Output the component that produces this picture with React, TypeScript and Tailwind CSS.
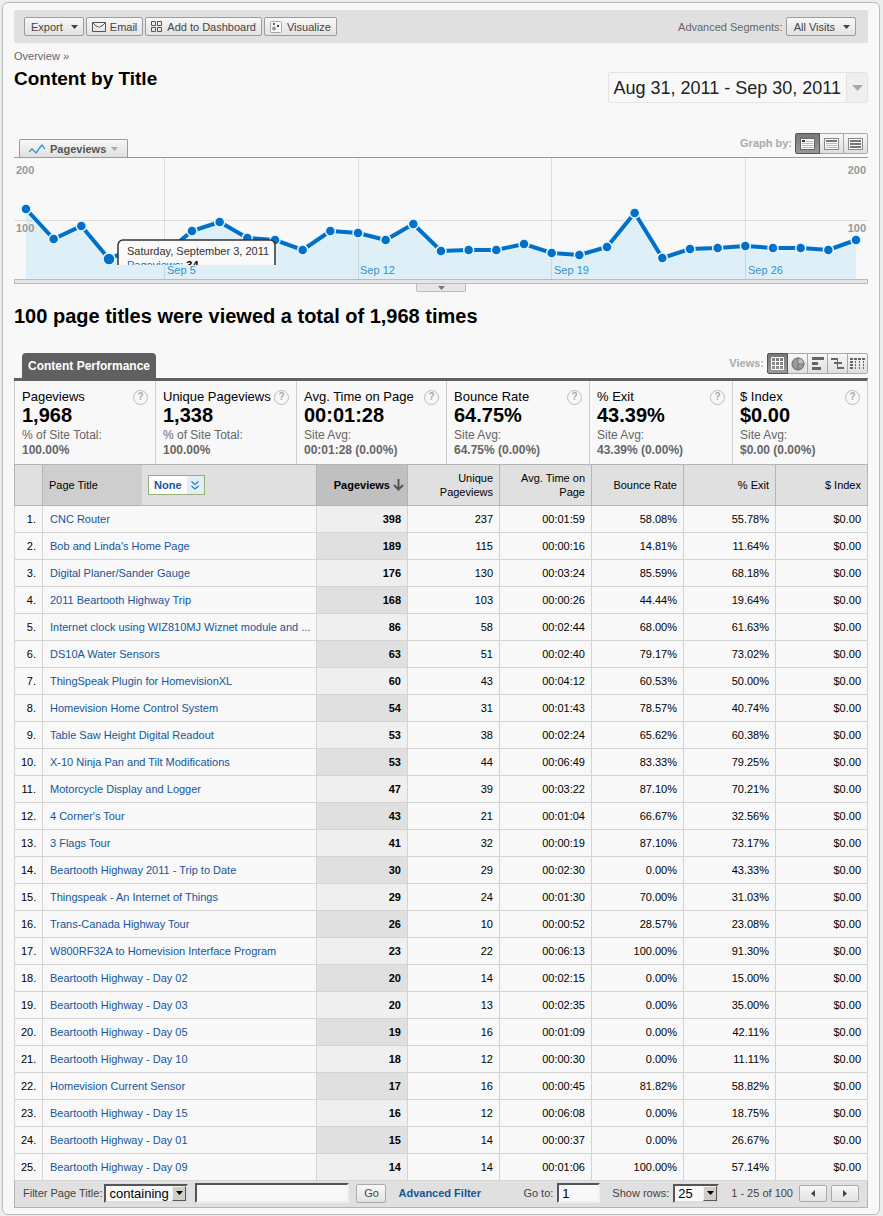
import type { ReactNode } from "react";
import clsx from "clsx";

const CHART_POINTS = [
  51, 81, 68, 101, 89, 96, 73, 64, 80, 82, 92, 73, 75, 82, 66, 93, 92, 92, 86, 95, 97, 89, 55, 100, 91, 90, 88, 90, 90, 92, 82,
];

const SUMMARY = [
  { label: "Pageviews", value: "1,968", note: "% of Site Total:", detail: "100.00%" },
  { label: "Unique Pageviews", value: "1,338", note: "% of Site Total:", detail: "100.00%" },
  { label: "Avg. Time on Page", value: "00:01:28", note: "Site Avg:", detail: "00:01:28 (0.00%)" },
  { label: "Bounce Rate", value: "64.75%", note: "Site Avg:", detail: "64.75% (0.00%)" },
  { label: "% Exit", value: "43.39%", note: "Site Avg:", detail: "43.39% (0.00%)" },
  { label: "$ Index", value: "$0.00", note: "Site Avg:", detail: "$0.00 (0.00%)" },
];

// title, pageviews, unique, avg. time, bounce rate, exit
const ROWS = [
  ["CNC Router", "398", "237", "00:01:59", "58.08%", "55.78%"],
  ["Bob and Linda's Home Page", "189", "115", "00:00:16", "14.81%", "11.64%"],
  ["Digital Planer/Sander Gauge", "176", "130", "00:03:24", "85.59%", "68.18%"],
  ["2011 Beartooth Highway Trip", "168", "103", "00:00:26", "44.44%", "19.64%"],
  ["Internet clock using WIZ810MJ Wiznet module and ...", "86", "58", "00:02:44", "68.00%", "61.63%"],
  ["DS10A Water Sensors", "63", "51", "00:02:40", "79.17%", "73.02%"],
  ["ThingSpeak Plugin for HomevisionXL", "60", "43", "00:04:12", "60.53%", "50.00%"],
  ["Homevision Home Control System", "54", "31", "00:01:43", "78.57%", "40.74%"],
  ["Table Saw Height Digital Readout", "53", "38", "00:02:24", "65.62%", "60.38%"],
  ["X-10 Ninja Pan and Tilt Modifications", "53", "44", "00:06:49", "83.33%", "79.25%"],
  ["Motorcycle Display and Logger", "47", "39", "00:03:22", "87.10%", "70.21%"],
  ["4 Corner's Tour", "43", "21", "00:01:04", "66.67%", "32.56%"],
  ["3 Flags Tour", "41", "32", "00:00:19", "87.10%", "73.17%"],
  ["Beartooth Highway 2011 - Trip to Date", "30", "29", "00:02:30", "0.00%", "43.33%"],
  ["Thingspeak - An Internet of Things", "29", "24", "00:01:30", "70.00%", "31.03%"],
  ["Trans-Canada Highway Tour", "26", "10", "00:00:52", "28.57%", "23.08%"],
  ["W800RF32A to Homevision Interface Program", "23", "22", "00:06:13", "100.00%", "91.30%"],
  ["Beartooth Highway - Day 02", "20", "14", "00:02:15", "0.00%", "15.00%"],
  ["Beartooth Highway - Day 03", "20", "13", "00:02:35", "0.00%", "35.00%"],
  ["Beartooth Highway - Day 05", "19", "16", "00:01:09", "0.00%", "42.11%"],
  ["Beartooth Highway - Day 10", "18", "12", "00:00:30", "0.00%", "11.11%"],
  ["Homevision Current Sensor", "17", "16", "00:00:45", "81.82%", "58.82%"],
  ["Beartooth Highway - Day 15", "16", "12", "00:06:08", "0.00%", "18.75%"],
  ["Beartooth Highway - Day 01", "15", "14", "00:00:37", "0.00%", "26.67%"],
  ["Beartooth Highway - Day 09", "14", "14", "00:01:06", "100.00%", "57.14%"],
];

function Caret({ className }: { className?: string }) {
  return (
    <svg width="7" height="4" viewBox="0 0 7 4" className={clsx("shrink-0", className)} aria-hidden="true">
      <path d="M0 0h7L3.5 4z" fill="currentColor" />
    </svg>
  );
}

function ToolbarButton({ children }: { children: ReactNode }) {
  return (
    <button className="flex h-[19px] items-center gap-1 rounded-xs border border-[#9c9c9c] bg-linear-to-b from-[#f8f8f8] to-[#e2e2e2] px-[5px] whitespace-nowrap text-[#444]">
      {children}
    </button>
  );
}

function Toolbar() {
  return (
    <div className="flex h-[33px] items-center justify-between rounded-xs bg-[#e0e0e0] pr-3 pl-2.5">
      <div className="flex gap-0.5">
        <ToolbarButton>
          <span className="pl-px">Export</span>
          <Caret className="ml-1" />
        </ToolbarButton>
        <ToolbarButton>
          <svg width="14" height="10" viewBox="0 0 14 10" fill="none" stroke="#555" aria-hidden="true">
            <path d="M.5.5h13v9H.5zM1 1l3 3 2 .5L7 5.500l1-1 2-.5 3-3" />
          </svg>
          Email
        </ToolbarButton>
        <ToolbarButton>
          <svg width="11" height="11" viewBox="0 0 11 11" fill="none" stroke="#555" aria-hidden="true">
            <path d="M.5.5h4v4h-4zM6.500.5h4v4h-4zM.5 6.500h4v4h-4zM6.500 6.500h4v4h-4z" />
          </svg>
          <span className="pl-px">Add to Dashboard</span>
        </ToolbarButton>
        <ToolbarButton>
          <svg width="12" height="12" viewBox="0 0 12 12" aria-hidden="true">
            <rect x=".5" y=".5" width="11" height="11" rx="1" fill="#f8f8f8" stroke="#aaa" />
            <rect x="3" y="2" width="2" height="2" fill="#666" />
            <rect x="7" y="4" width="2" height="2" fill="#444" />
            <circle cx="4" cy="7.500" r="2" fill="#999" />
          </svg>
          <span className="pl-px">Visualize</span>
        </ToolbarButton>
      </div>
      <div className="flex items-center gap-[3px]">
        <span className="text-[#666]">Advanced Segments:</span>
        <ToolbarButton>
          <span className="pl-0.5">All Visits</span>
          <Caret className="ml-1" />
        </ToolbarButton>
      </div>
    </div>
  );
}

function SegmentButton({ label, active, wide, children }: { label: string; active?: boolean; wide?: boolean; children: ReactNode }) {
  return (
    <button
      aria-label={label}
      aria-pressed={!!active}
      className={clsx(
        "-ml-px flex h-[21px] items-center justify-center border first:rounded-l-xs last:rounded-r-xs",
        wide ? "w-[25px]" : "w-[21px]",
        active ? "relative border-[#555] bg-linear-to-b from-[#777] to-[#999] text-white" : "border-[#a8a8a8] bg-linear-to-b from-[#f8f8f8] to-[#dedede] text-[#666]",
      )}
    >
      {children}
    </button>
  );
}

function PageIcon({ kind }: { kind: "day" | "week" | "month" }) {
  return (
    <svg width="15" height="12" viewBox="0 0 15 12" aria-hidden="true">
      <rect x=".5" y=".5" width="14" height="11" fill="#fafafa" stroke={kind === "day" ? "#666" : "#888"} />
      {kind === "day" && <path d="M2 2h3v2H2z" fill="#336" />}
      {kind === "day" && <path d="M6 3.500h7M2 5.500h11M2 7.500h11M2 9.500h11" stroke="#bbb" />}
      {kind === "week" && <path d="M2 2h11v2H2z" fill="#777" />}
      {kind === "week" && <path d="M2 5.500h11M2 7.500h11M2 9.500h11" stroke="#bbb" />}
      {kind === "month" && <path d="M2 2h11v2H2zM2 5h11v2H2zM2 8h11v2H2z" fill="#777" />}
    </svg>
  );
}

function PageviewsChart() {
  const points = CHART_POINTS.map((y, i) => [12 + (i * 830) / 30, y]);
  const line = points.map(([x, y]) => `${x},${y}`).join(" ");

  return (
    <div className="border-t border-[#9a9a9a]">
      <svg viewBox="0 0 854 121" className="block w-full" role="img" aria-label="Pageviews by day">
        <defs>
          <clipPath id="plot">
            <rect width="854" height="107" />
          </clipPath>
        </defs>
        <polygon points={`12,121 ${line} 842,121`} fill="#dfeff8" />
        <path d="M0 62.500h854M150.500 0v121M344.500 0v121M537.500 0v121M731.500 0v121" stroke="#000" strokeOpacity=".1" />
        <polyline points={line} fill="none" stroke="#e8f5fc" strokeWidth="6" />
        <polyline points={line} fill="none" stroke="#0070c8" strokeWidth="4" />
        {points.map(([x, y], i) => (
          <circle key={i} cx={x} cy={y} r={i === 3 ? 6 : 5} fill="#0070c8" stroke="#e8f5fc" strokeWidth="1.5" />
        ))}
        <g fill="#999" fontSize="11" fontWeight="bold">
          <text x="2" y="16">200</text>
          <text x="2" y="74">100</text>
          <text x="852" y="16" textAnchor="end">200</text>
          <text x="852" y="74" textAnchor="end">100</text>
        </g>
        <g clipPath="url(#plot)" fontSize="11">
          <rect x="104" y="82" width="157" height="44" rx="5" fill="#f9f9f9" stroke="#333" strokeWidth="1.5" />
          <text x="113" y="97" fill="#333">Saturday, September 3, 2011</text>
          <text x="113" y="111" fill="#0070c8">
            Pageviews: <tspan fill="#000" fontWeight="bold">34</tspan>
          </text>
        </g>
        <g fill="#3393c9" fontSize="11">
          <text x="153" y="116">Sep 5</text>
          <text x="346" y="116">Sep 12</text>
          <text x="540" y="116">Sep 19</text>
          <text x="734" y="116">Sep 26</text>
        </g>
      </svg>
      <div className="h-[5px] border border-[#bbb] bg-[#e6e6e6]" />
      <button aria-label="Collapse graph" className="mx-auto flex h-2 w-[50px] items-center justify-center rounded-b-xs border border-t-0 border-[#bbb] bg-[#e6e6e6] text-[#777]">
        <Caret />
      </button>
    </div>
  );
}

function ViewIcons() {
  return (
    <div className="flex pl-px">
      <SegmentButton label="Table" active>
        <svg width="13" height="13" viewBox="0 0 13 13" fill="none" aria-hidden="true">
          <path d="M.5.5h12v12H.5zM4.500 0v13M8.500 0v13M0 4.500h13M0 8.500h13" stroke="#fff" />
        </svg>
      </SegmentButton>
      <SegmentButton label="Percentage">
        <svg width="14" height="14" viewBox="0 0 14 14" aria-hidden="true">
          <circle cx="7" cy="7" r="6" fill="#999" stroke="#666" />
          <path d="M7 7V1a6 6 0 0 1 6 6z" fill="#d9b8b8" stroke="#777" />
          <path d="M7 7v6" stroke="#777" />
        </svg>
      </SegmentButton>
      <SegmentButton label="Performance">
        <svg width="12" height="13" viewBox="0 0 12 13" fill="currentColor" aria-hidden="true">
          <path d="M0 0h12v3H0zM0 5h6v3H0zM0 10h9v3H0z" />
        </svg>
      </SegmentButton>
      <SegmentButton label="Comparison">
        <svg width="13" height="13" viewBox="0 0 13 13" fill="currentColor" aria-hidden="true">
          <path d="M0 1h7v2H0zM6 1h1v11H6zM6 5h5v2H6zM3 5h4v2H3zM6 10h7v2H6z" />
        </svg>
      </SegmentButton>
      <SegmentButton label="Pivot">
        <svg width="15" height="12" viewBox="0 0 15 12" fill="none" stroke="currentColor" aria-hidden="true">
          <path d="M0 1h15" strokeWidth="2" strokeDasharray="3 1" />
          <path d="M0 4h3M0 7h3M0 10h3" strokeWidth="2" />
          <path d="M5.500 3v9M9.500 3v9M13.500 3v9" strokeDasharray="2 1" />
        </svg>
      </SegmentButton>
    </div>
  );
}

function Summary() {
  return (
    <div className="grid grid-cols-[141fr_141fr_150fr_143fr_143fr_135fr] border-t-3 border-r border-t-[#606060] border-r-[#ccc]">
      {SUMMARY.map((item) => (
        <div key={item.label} className="border-l border-[#ccc] pt-2 pr-[7px] pb-1.5 pl-[7px] text-xs leading-[15px] text-[#666]">
          <div className="flex items-center justify-between">
            <span className="text-[13px] leading-4 whitespace-nowrap text-black">{item.label}</span>
            <button aria-label={`About ${item.label}`} className="size-[15px] shrink-0 rounded-full border border-[#bbb] text-[10px] leading-3 font-bold text-[#aaa]">
              ?
            </button>
          </div>
          <div className="mb-[3px] text-xl leading-5 font-bold text-black">{item.value}</div>
          <div>{item.note}</div>
          <div className="font-bold">{item.detail}</div>
        </div>
      ))}
    </div>
  );
}

function ContentTable() {
  const head = "border border-[#b4b4b4] px-1.5 text-right font-normal leading-[14px]";
  const cell = "border border-[#d4d4d4] px-1.5 text-right";

  return (
    <table className="w-full table-fixed border-collapse text-black">
      <colgroup>
        <col className="w-7" />
        <col />
        <col className="w-[91px]" />
        <col className="w-[92px]" />
        <col className="w-[92px]" />
        <col className="w-[92px]" />
        <col className="w-[92px]" />
        <col className="w-[92px]" />
      </colgroup>
      <thead>
        <tr className="h-[41px] bg-[#e0e0e0]">
          <td className="border border-[#b4b4b4]" />
          <th scope="col" className="h-[41px] border border-[#b4b4b4] p-0 text-left font-normal">
            <div className="flex h-10 items-center">
              <span className="flex h-full w-[99px] items-center bg-[#cecece] pl-1.5">Page Title</span>
              <button className="ml-1.5 flex h-5 items-center border border-[#98b077] bg-white font-bold text-[#15569b]">
                <span className="px-[5px]">None</span>
                <span className="flex h-full w-[17px] items-center justify-center bg-[#dfeff8]">
                  <svg width="8" height="9" viewBox="0 0 8 9" fill="none" stroke="#3a78b5" strokeWidth="1.300" aria-hidden="true">
                    <path d="M.5.5 4 3.500 7.500.5M.5 5 4 8l3.500-3" />
                  </svg>
                </span>
              </button>
            </div>
          </th>
          <th scope="col" aria-sort="descending" className="border border-[#b4b4b4] bg-[#c0c0c0] pr-[3px] font-bold">
            <div className="flex items-center justify-end gap-[3px]">
              Pageviews
              <svg width="11" height="12" viewBox="0 0 11 12" fill="none" stroke="#555" strokeWidth="2" aria-hidden="true">
                <path d="M5.500 0v11M1 6l4.500 4.500L10 6" />
              </svg>
            </div>
          </th>
          <th scope="col" className={head}>Unique Pageviews</th>
          <th scope="col" className={head}>Avg. Time on Page</th>
          <th scope="col" className={head}>Bounce Rate</th>
          <th scope="col" className={head}>% Exit</th>
          <th scope="col" className={head}>$ Index</th>
        </tr>
      </thead>
      <tbody>
        {ROWS.map(([title, views, ...rest], i) => (
          <tr key={title} className="h-[27px] last:border-b last:border-[#b4b4b4]">
            <td className={cell}>{i + 1}.</td>
            <td className="border border-[#d4d4d4] pl-[7px] whitespace-nowrap">
              <a href="#" className="text-[#15569b]">{title}</a>
            </td>
            <td className={clsx(cell, "font-bold", i % 2 ? "bg-[#e0e0e0]" : "bg-[#efefef]")}>{views}</td>
            {rest.map((value, j) => (
              <td key={j} className={cell}>{value}</td>
            ))}
            <td className={cell}>$0.00</td>
          </tr>
        ))}
      </tbody>
    </table>
  );
}

function SelectBox({ id, value, className }: { id: string; value: string; className: string }) {
  return (
    <span className={clsx("relative block h-[19px] shrink-0", className)}>
      <select id={id} className="block size-full appearance-none border-2 border-t-[#555] border-r-[#ddd] border-b-[#ddd] border-l-[#555] bg-[#f8f8f8] pl-[3px] text-[13px] leading-[15px] text-black">
        <option>{value}</option>
      </select>
      <span className="pointer-events-none absolute top-0.5 right-0.5 bottom-0.5 flex w-3.5 items-center justify-center border border-t-[#eee] border-r-[#555] border-b-[#555] border-l-[#eee] bg-[#d0cec6] text-black">
        <Caret />
      </span>
    </span>
  );
}

function TableFooter() {
  const field = "h-5 border-2 border-t-[#555] border-r-[#f0f0f0] border-b-[#f0f0f0] border-l-[#555] bg-[#f8f8f8] px-[3px] text-[13px] text-black";
  const button = "h-[17px] shrink-0 rounded-xs border border-[#aaa] bg-linear-to-b from-[#f8f8f8] to-[#e2e2e2]";

  return (
    <div className="flex h-[27px] items-center border border-t-0 border-[#b4b4b4] bg-[#e0e0e0] pr-2 pb-0.5 pl-2 whitespace-nowrap text-[#444]">
      <label htmlFor="filter-mode">Filter Page Title:</label>
      <SelectBox id="filter-mode" value="containing" className="ml-0.5 w-[84px]" />
      <input aria-label="Filter text" className={clsx(field, "ml-[7px] w-[154px] shrink-0")} />
      <button className="ml-[7px] h-[19px] w-[30px] shrink-0 rounded-xs border border-[#aaa] bg-linear-to-b from-[#f8f8f8] to-[#e2e2e2]">Go</button>
      <a href="#" className="ml-3 font-bold text-[#15569b]">Advanced Filter</a>
      <label htmlFor="goto" className="ml-auto">Go to:</label>
      <input id="goto" defaultValue="1" className={clsx(field, "ml-1 w-[43px]")} />
      <label htmlFor="rows" className="ml-3">Show rows:</label>
      <SelectBox id="rows" value="25" className="ml-1 w-[46px]" />
      <span className="ml-3">1 - 25 of 100</span>
      <button aria-label="Previous page" className={clsx(button, "ml-1.5 flex w-7 items-center justify-center")}>
        <svg width="4" height="7" viewBox="0 0 4 7" aria-hidden="true">
          <path d="M4 0v7L0 3.500z" fill="currentColor" />
        </svg>
      </button>
      <button aria-label="Next page" className={clsx(button, "ml-1 flex w-7 items-center justify-center")}>
        <svg width="4" height="7" viewBox="0 0 4 7" aria-hidden="true">
          <path d="M0 0v7l4-3.500z" fill="currentColor" />
        </svg>
      </button>
    </div>
  );
}

export default function App() {
  return (
    <div className="bg-[#eaefee] p-0.5 pr-[3px] font-['Liberation_Sans',Arial,sans-serif] text-[11px] leading-[14px]">
      <main className="rounded-md border border-[#bbb] bg-[#f8f8f8] px-[11px] pt-[7px] pb-1.5">
        <Toolbar />

        <header className="flex items-end justify-between">
          <div className="pt-[5px] pb-3">
            <nav className="leading-4 text-[#666]">
              <a href="#">Overview</a> »
            </nav>
            <h1 className="mt-[3px] text-[19px] leading-6 font-bold text-black">Content by Title</h1>
          </div>
          <button className="flex h-[31px] items-stretch rounded-xs border border-[#e3e3e3] text-lg text-[#222]">
            <span className="flex items-center pr-[5px] pl-1">Aug 31, 2011 - Sep 30, 2011</span>
            <span className="flex w-[21px] items-center justify-center border-l border-[#e3e3e3] bg-[#efefef] text-[#aaa]">
              <svg width="11" height="6" viewBox="0 0 11 6" aria-hidden="true">
                <path d="M0 0h11L5.500 6z" fill="currentColor" />
              </svg>
            </span>
          </button>
        </header>

        <div className="mt-[30px] flex h-6 justify-between">
          <button className="ml-[5px] flex h-[18px] items-center gap-[5px] self-end rounded-t-xs border border-b-0 border-[#9a9a9a] bg-linear-to-b from-[#f8f8f8] to-[#e0e0e0] px-[9px] font-bold text-[#555]">
            <svg width="16" height="10" viewBox="0 0 16 10" fill="none" stroke="#3393d0" strokeWidth="1.300" aria-hidden="true">
              <path d="m0 8 3-3 4 4 5-7 1-1 3 4" />
            </svg>
            Pageviews
            <Caret className="text-[#aaa]" />
          </button>
          <div className="flex items-start gap-[3px]">
            <span className="leading-5 font-bold text-[#aaa]">Graph by:</span>
            <div className="flex pl-px">
              <SegmentButton label="Day" active wide><PageIcon kind="day" /></SegmentButton>
              <SegmentButton label="Week" wide><PageIcon kind="week" /></SegmentButton>
              <SegmentButton label="Month" wide><PageIcon kind="month" /></SegmentButton>
            </div>
          </div>
        </div>
        <PageviewsChart />

        <h2 className="mt-3 text-xl leading-6 font-bold text-black">100 page titles were viewed a total of 1,968 times</h2>

        <section className="mt-[25px]">
          <div className="flex h-[25px] items-start justify-between">
            <h3 className="ml-2 flex h-full items-center rounded-t-sm bg-[#606060] px-1.5 text-xs font-bold text-white">Content Performance</h3>
            <div className="flex items-start gap-[3px]">
              <span className="leading-5 font-bold text-[#aaa]">Views:</span>
              <ViewIcons />
            </div>
          </div>
          <Summary />
          <ContentTable />
          <TableFooter />
        </section>
      </main>
    </div>
  );
}
